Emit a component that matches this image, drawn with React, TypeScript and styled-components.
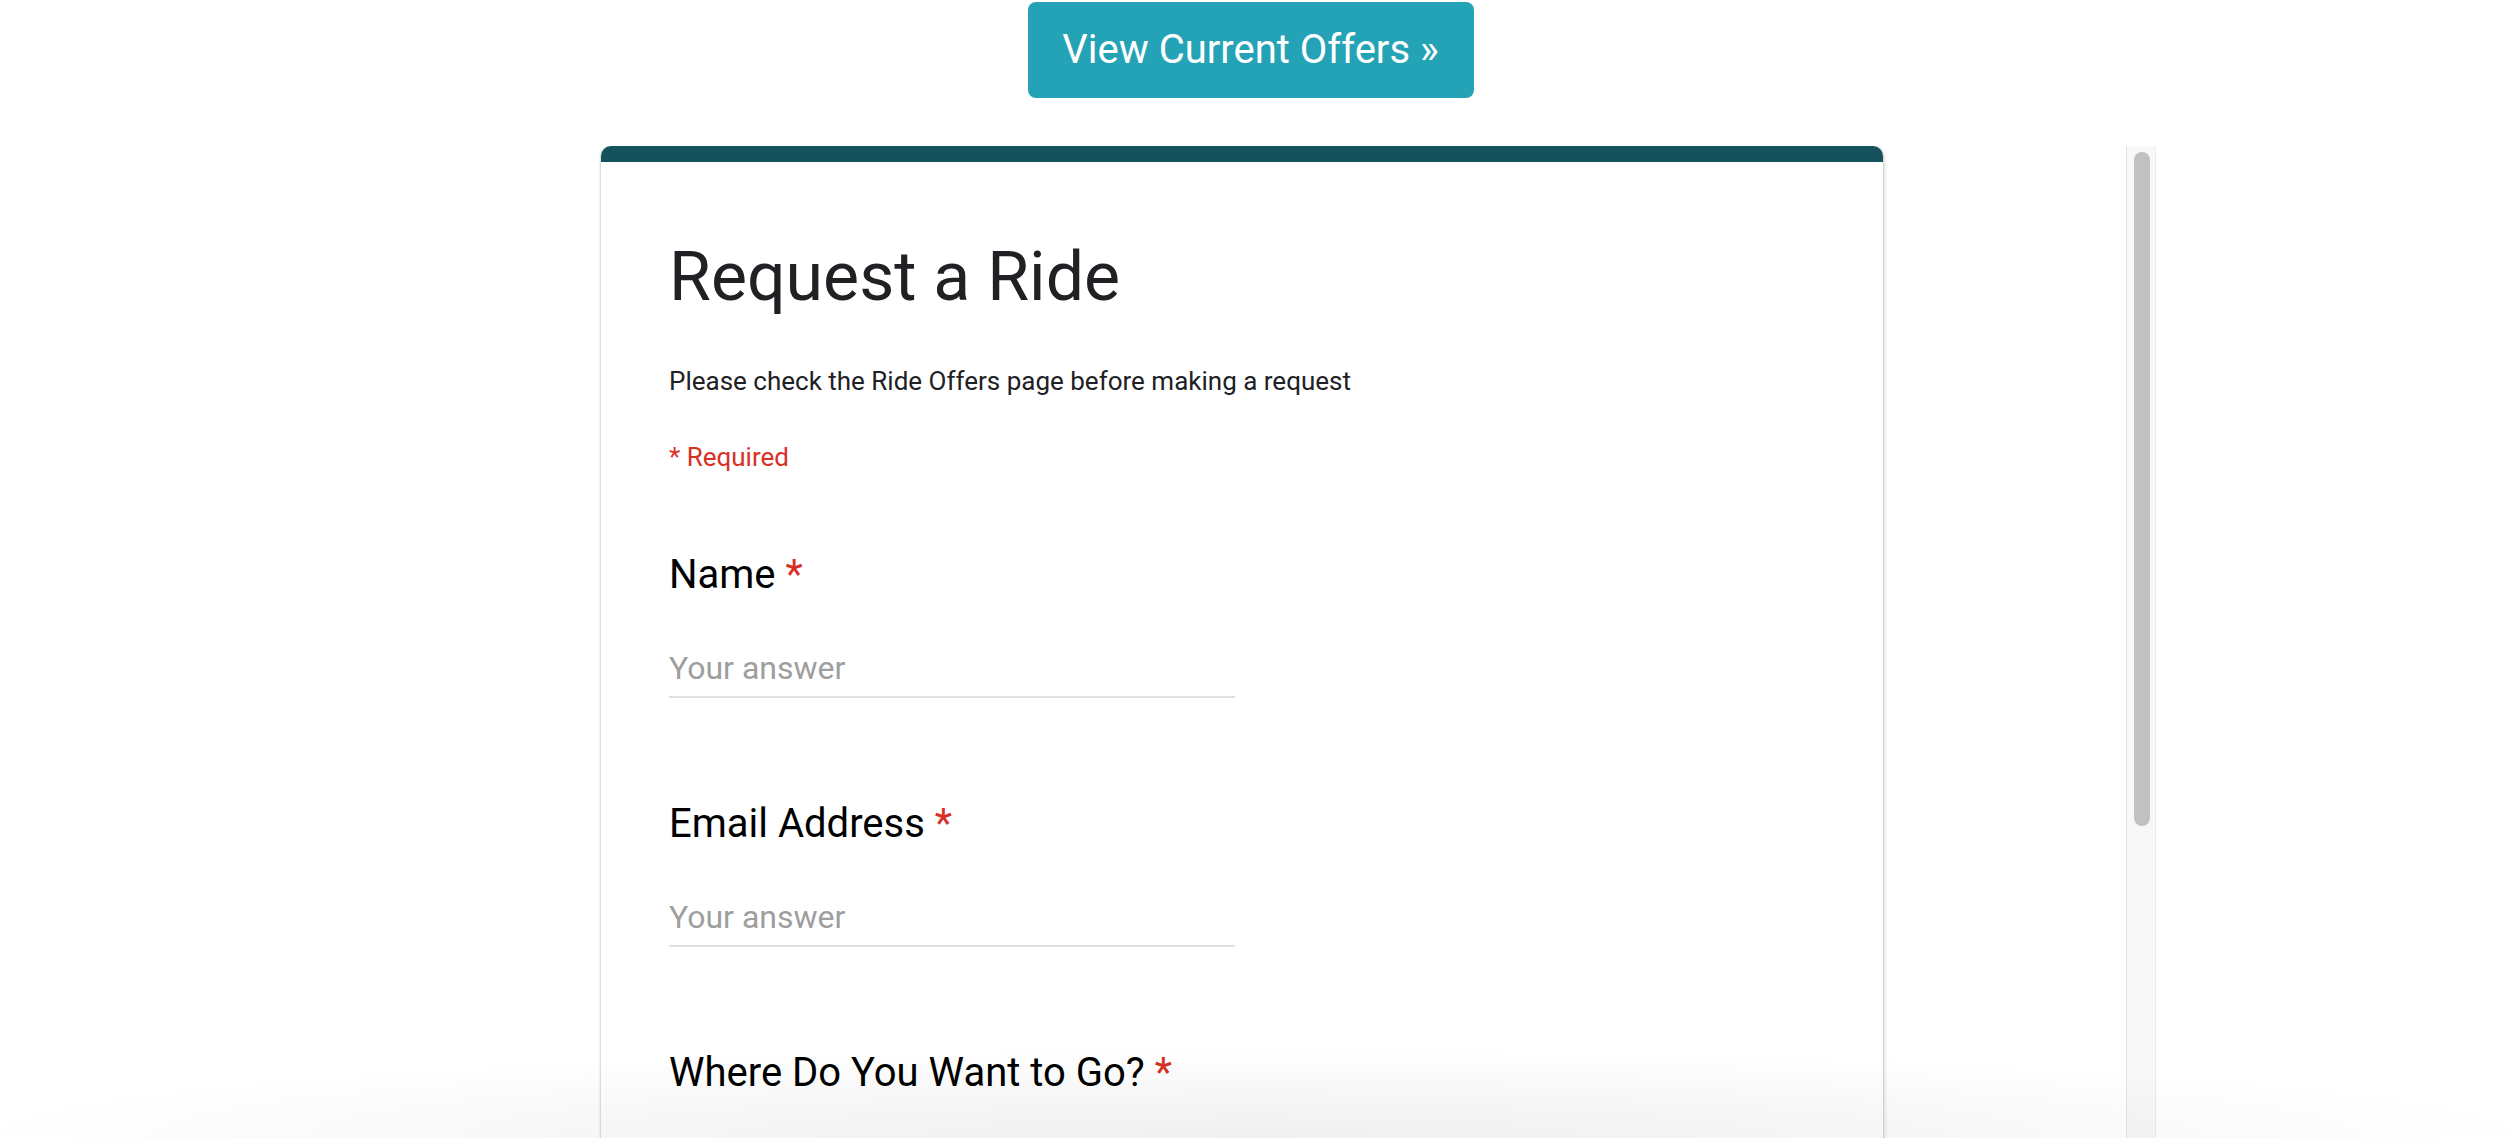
import React from "react";
import styled, { createGlobalStyle } from "styled-components";

const GlobalStyle = createGlobalStyle`
  html, body {
    margin: 0;
    padding: 0;
    background: #ffffff;
    overflow: hidden;
    font-family: Roboto, "Liberation Sans", Arial, sans-serif;
  }
  * { box-sizing: border-box; }
`;

const Page = styled.div`
  width: 100%;
  height: 1138px;
  display: flex;
  flex-direction: column;
  align-items: stretch;
  overflow: hidden;
`;

const TopBar = styled.div`
  display: flex;
  justify-content: center;
  padding-top: 2px;
  margin-bottom: 48px;
`;

const OffersButton = styled.a`
  display: inline-flex;
  align-items: center;
  height: 96px;
  padding: 0 35px 0 34px;
  background: #25a3b6;
  color: #ffffff;
  border-radius: 8px;
  font-family: Roboto, "Liberation Sans", sans-serif;
  font-size: 40px;
  line-height: 96px;
  text-decoration: none;
  white-space: nowrap;
  margin-left: -6px;
`;

const Frame = styled.div`
  width: 1800px;
  margin-left: calc(50% - 898px);
  flex: 1;
  display: flex;
  overflow: hidden;
`;

const FrameBody = styled.div`
  flex: 1;
  display: flex;
  justify-content: center;
  padding-left: 2px;
`;

const Scrollbar = styled.div`
  width: 30px;
  flex: 0 0 30px;
  background: #f8f8f8;
  border-left: 1px solid #e4e4e4;
  border-right: 1px solid #ececec;
  padding: 6px 0 0 7px;
`;

const Thumb = styled.div`
  width: 16px;
  height: 674px;
  border-radius: 8px;
  background: #c1c1c1;
`;

const Card = styled.div`
  width: 1282px;
  align-self: flex-start;
  background: #ffffff;
  border-radius: 10px 10px 0 0;
  box-shadow: 0 1px 3px 0 rgba(0, 0, 0, 0.22), 0 0 2px 0 rgba(0, 0, 0, 0.16),
    2px 2px 6px 0 rgba(0, 0, 0, 0.08);
  overflow: hidden;
`;

const CardStripe = styled.div`
  height: 16px;
  background: #15525c;
`;

const CardContent = styled.div`
  padding: 75px 68px 160px 68px;
  display: flex;
  flex-direction: column;
  align-items: flex-start;
`;

const Title = styled.h1`
  margin: 0;
  font-family: Roboto, sans-serif;
  font-weight: 400;
  font-size: 68px;
  line-height: 80px;
  color: #202124;
  letter-spacing: 0;
`;

const Description = styled.p`
  margin: 48px 0 0 0;
  font-size: 26px;
  line-height: 32px;
  color: #202124;
`;

const RequiredNote = styled.div`
  margin-top: 44px;
  font-size: 26px;
  line-height: 32px;
  color: #d93025;
`;

const Question = styled.div<{ $first?: boolean }>`
  margin-top: ${(p) => (p.$first ? "78px" : "102px")};
  display: flex;
  flex-direction: column;
  align-items: flex-start;
`;

const Label = styled.div`
  font-size: 40px;
  line-height: 48px;
  color: #000000;
  white-space: nowrap;
`;

const Star = styled.span`
  color: #d93025;
  margin-left: 10px;
`;

const AnswerInput = styled.input`
  margin-top: 49px;
  width: 566px;
  height: 50px;
  padding: 0 0 8px 0;
  border: none;
  border-bottom: 2px solid #e0e0e0;
  outline: none;
  background: transparent;
  font-family: Roboto, sans-serif;
  font-size: 32px;
  line-height: 40px;
  color: #202124;

  &::placeholder {
    color: #9e9e9e;
    opacity: 1;
  }
`;

const BottomFade = styled.div`
  position: fixed;
  left: 0;
  right: 0;
  bottom: 0;
  height: 90px;
  pointer-events: none;
  background: radial-gradient(
    ellipse 52% 100% at 50% 100%,
    rgba(0, 0, 0, 0.06) 0%,
    rgba(0, 0, 0, 0.035) 45%,
    rgba(0, 0, 0, 0) 100%
  );
`;

const questions = ["Name", "Email Address", "Where Do You Want to Go?"];

export default function App() {
  return (
    <>
      <GlobalStyle />
      <Page>
        <TopBar>
          <OffersButton href="#">View Current Offers »</OffersButton>
        </TopBar>
        <Frame>
          <FrameBody>
            <Card>
              <CardStripe />
              <CardContent>
                <Title>Request a Ride</Title>
                <Description>Please check the Ride Offers page before making a request</Description>
                <RequiredNote>* Required</RequiredNote>
                {questions.map((q, i) => (
                  <Question key={q} $first={i === 0}>
                    <Label>
                      {q}
                      <Star>*</Star>
                    </Label>
                    {i < 2 && <AnswerInput placeholder="Your answer" />}
                  </Question>
                ))}
              </CardContent>
            </Card>
          </FrameBody>
          <Scrollbar>
            <Thumb />
          </Scrollbar>
        </Frame>
      </Page>
      <BottomFade />
    </>
  );
}
